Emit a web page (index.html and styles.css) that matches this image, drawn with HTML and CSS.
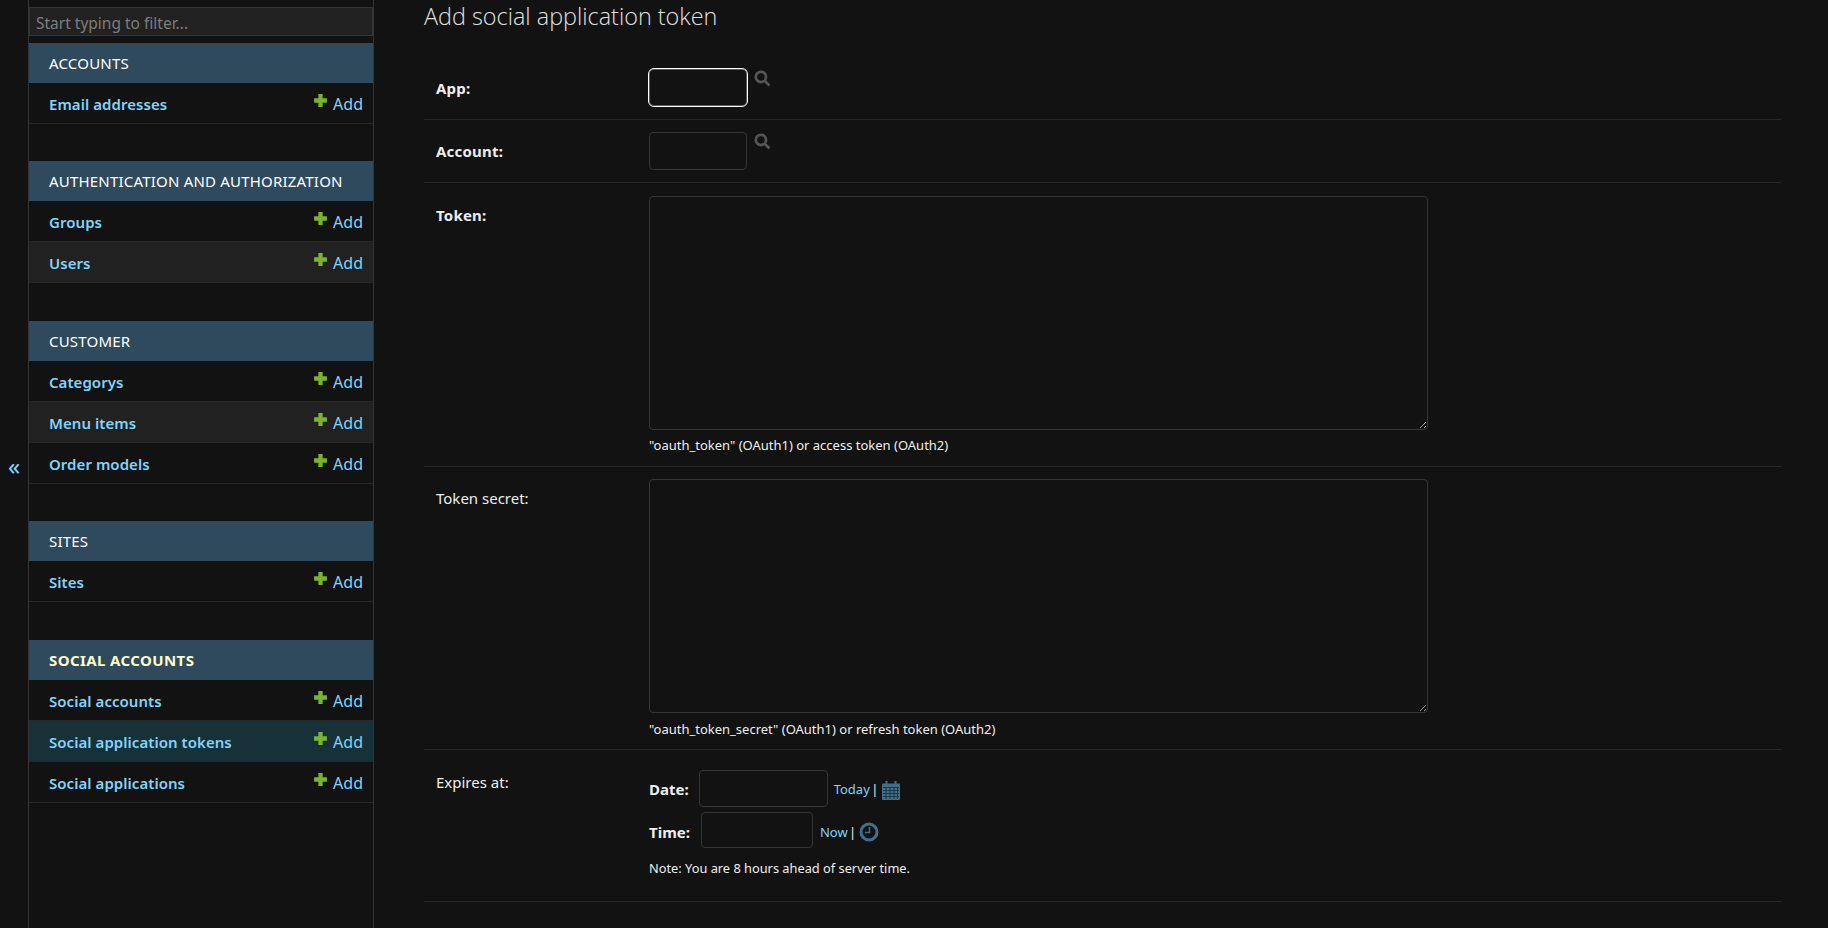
FILE: index.html
```html
<!DOCTYPE html>
<html lang="en">

<head>
  <meta charset="UTF-8">
  <title>Add social application token</title>
  <link rel="stylesheet" href="styles.css">
</head>

<body>
  <div class="page">
    <button class="nav-toggle">«</button>

    <nav class="sidebar">
      <input class="nav-filter" placeholder="Start typing to filter...">

      <div class="app-group">
        <div class="caption">Accounts</div>
        <div class="model-row"><a href="#">Email addresses</a><a class="add-link" href="#"><svg class="plus" viewBox="0 0 14 14"><path d="M5 1h4v4h4v4H9v4H5V9H1V5h4z"/></svg>Add</a></div>
      </div>

      <div class="app-group">
        <div class="caption">Authentication and Authorization</div>
        <div class="model-row"><a href="#">Groups</a><a class="add-link" href="#"><svg class="plus" viewBox="0 0 14 14"><path d="M5 1h4v4h4v4H9v4H5V9H1V5h4z"/></svg>Add</a></div>
        <div class="model-row alt"><a href="#">Users</a><a class="add-link" href="#"><svg class="plus" viewBox="0 0 14 14"><path d="M5 1h4v4h4v4H9v4H5V9H1V5h4z"/></svg>Add</a></div>
      </div>

      <div class="app-group">
        <div class="caption">Customer</div>
        <div class="model-row"><a href="#">Categorys</a><a class="add-link" href="#"><svg class="plus" viewBox="0 0 14 14"><path d="M5 1h4v4h4v4H9v4H5V9H1V5h4z"/></svg>Add</a></div>
        <div class="model-row alt"><a href="#">Menu items</a><a class="add-link" href="#"><svg class="plus" viewBox="0 0 14 14"><path d="M5 1h4v4h4v4H9v4H5V9H1V5h4z"/></svg>Add</a></div>
        <div class="model-row"><a href="#">Order models</a><a class="add-link" href="#"><svg class="plus" viewBox="0 0 14 14"><path d="M5 1h4v4h4v4H9v4H5V9H1V5h4z"/></svg>Add</a></div>
      </div>

      <div class="app-group">
        <div class="caption">Sites</div>
        <div class="model-row"><a href="#">Sites</a><a class="add-link" href="#"><svg class="plus" viewBox="0 0 14 14"><path d="M5 1h4v4h4v4H9v4H5V9H1V5h4z"/></svg>Add</a></div>
      </div>

      <div class="app-group">
        <div class="caption current">Social accounts</div>
        <div class="model-row"><a href="#">Social accounts</a><a class="add-link" href="#"><svg class="plus" viewBox="0 0 14 14"><path d="M5 1h4v4h4v4H9v4H5V9H1V5h4z"/></svg>Add</a></div>
        <div class="model-row selected"><a href="#">Social application tokens</a><a class="add-link" href="#"><svg class="plus" viewBox="0 0 14 14"><path d="M5 1h4v4h4v4H9v4H5V9H1V5h4z"/></svg>Add</a></div>
        <div class="model-row"><a href="#">Social applications</a><a class="add-link" href="#"><svg class="plus" viewBox="0 0 14 14"><path d="M5 1h4v4h4v4H9v4H5V9H1V5h4z"/></svg>Add</a></div>
      </div>
    </nav>

    <main class="content">
      <h1>Add social application token</h1>

      <form>
        <div class="form-row row-app">
          <label class="field-label required">App:</label>
          <input class="id-input focused">
          <svg class="lookup" viewBox="0 0 16 16"><circle cx="6.5" cy="6.5" r="4.8"/><path d="M10 10l4.5 4.5"/></svg>
        </div>

        <div class="form-row row-account">
          <label class="field-label required">Account:</label>
          <input class="id-input">
          <svg class="lookup" viewBox="0 0 16 16"><circle cx="6.5" cy="6.5" r="4.8"/><path d="M10 10l4.5 4.5"/></svg>
        </div>

        <div class="form-row row-token">
          <label class="field-label required">Token:</label>
          <div class="field-box">
            <textarea></textarea>
            <div class="help">"oauth_token" (OAuth1) or access token (OAuth2)</div>
          </div>
        </div>

        <div class="form-row row-secret">
          <label class="field-label">Token secret:</label>
          <div class="field-box">
            <textarea></textarea>
            <div class="help">"oauth_token_secret" (OAuth1) or refresh token (OAuth2)</div>
          </div>
        </div>

        <div class="form-row row-date">
          <label class="field-label">Expires at:</label>
          <div class="field-box">
            <div class="datetime-line date-line">
              <span class="dt-label">Date:</span>
              <input class="date-input">
              <span class="shortcuts"><a href="#">Today</a> |</span>
              <svg class="dt-icon" viewBox="0 0 20 20">
                <path class="fill" d="M1 4.500q0-1 1-1h16q1 0 1 1V19q0 1-1 1H2q-1 0-1-1z"/>
                <path class="fill" d="M4.500 1h2v4h-2zM13.500 1h2v4h-2z"/>
                <path class="grid" d="M2 7.500h16M2 10.500h16M2 13.500h16M2 16.500h16M5 7v12M9 7v12M13 7v12M16.500 7v12"/>
              </svg>
            </div>
            <div class="datetime-line time-line">
              <span class="dt-label">Time:</span>
              <input class="time-input">
              <span class="shortcuts"><a href="#">Now</a> |</span>
              <svg class="dt-icon clock" viewBox="0 0 20 20">
                <circle class="ring" cx="10" cy="10" r="8"/>
                <path class="hands" d="M10.500 5v5.500H6"/>
              </svg>
            </div>
            <div class="note">Note: You are 8 hours ahead of server time.</div>
          </div>
        </div>
      </form>
    </main>
  </div>
</body>

</html>
```

FILE: styles.css
```css
html,
body {
  margin: 0;
  height: 100%;
  overflow: hidden;
  background-color: #121212;
}

body {
  color: #eeeeee;
  font-family: 'Noto Sans', 'Open Sans', sans-serif;
  font-size: 15px;
}

a {
  color: #81d4fa;
  text-decoration: none;
}

.page {
  display: flex;
  height: 928px;
}

/* Collapse button on the far left */
.nav-toggle {
  width: 29px;
  flex: none;
  padding: 3px 0 0;
  background: #121212;
  border: none;
  border-right: 1px solid #353535;
  color: #81d4fa;
  font-family: 'Noto Sans', sans-serif;
  font-size: 24px;
}

.sidebar {
  width: 344px;
  flex: none;
  padding-top: 7px;
  border-right: 1px solid #353535;
}

.nav-filter {
  display: block;
  box-sizing: border-box;
  width: 100%;
  height: 29px;
  margin-bottom: 6.75px;
  padding: 2px 6px 0;
  background: #212121;
  border: 1px solid #353535;
  border-radius: 0;
  font-family: inherit;
  font-size: 15.5px;
}

.nav-filter::placeholder {
  color: #7d7d7d;
}

.app-group {
  margin-bottom: 37.5px;
}

.caption {
  height: 40px;
  padding-left: 20px;
  background: #2f4a5c;
  color: #ffffff;
  font-size: 15px;
  letter-spacing: 0.2px;
  line-height: 41px;
  text-transform: uppercase;
}

.caption.current {
  color: #ffffcc;
  font-weight: 700;
  letter-spacing: 0.4px;
}

.model-row {
  display: flex;
  justify-content: space-between;
  height: 40px;
  padding: 0 10px 0 20px;
  border-bottom: 1px solid #282828;
  line-height: 43px;
}

.model-row > a:first-child {
  font-weight: 600;
  letter-spacing: 0.05px;
}

.model-row.alt {
  background: #212121;
}

.model-row.selected {
  background: #163238;
}

.add-link {
  display: flex;
  align-items: flex-start;
  font-size: 16px;
}

.plus {
  width: 15px;
  height: 15px;
  margin: 10px 5px 0 0;
  fill: #7ab32e;
}

.content {
  flex: 1;
  padding: 0 47px 0 50px;
}

h1 {
  margin: 0;
  height: 56px;
  color: #e0e0e0;
  font-family: 'Open Sans', sans-serif;
  font-size: 23.4px;
  font-weight: 300;
  line-height: 32px;
}

.form-row {
  display: flex;
  box-sizing: border-box;
  padding: 12px 0 0 12px;
  border-bottom: 1px solid #282828;
}

.row-app {
  height: 64px;
}

.row-account {
  height: 63px;
}

.row-token {
  height: 284px;
  padding-top: 13px;
}

.row-secret {
  height: 283px;
}

.row-date {
  height: 152px;
  padding-top: 17px;
}

.field-label {
  width: 213px;
  flex: none;
  height: 20px;
  padding-top: 10px;
  line-height: 20px;
}

.row-account .field-label,
.row-token .field-label,
.row-secret .field-label {
  padding-top: 9px;
}

.row-date .field-label {
  padding-top: 5px;
}

.required {
  letter-spacing: 0.2px;
  font-weight: 700;
}

input,
textarea {
  box-sizing: border-box;
  background: #121212;
  border: 1px solid #353535;
  border-radius: 4px;
  color: #eeeeee;
}

.id-input {
  width: 98px;
  height: 38px;
}

.id-input.focused {
  width: 100px;
  height: 39px;
  margin-left: -1px;
  border: 1px solid #ffffff;
  border-radius: 6px;
  box-shadow: inset 0 0 0 1px rgba(255, 255, 255, 0.3);
}

.lookup {
  width: 17px;
  height: 17px;
  margin: 1px 0 0 7px;
  fill: none;
  stroke: #555555;
  stroke-width: 2.6;
}

.focused + .lookup {
  margin: 2px 0 0 6px;
}

.field-box {
  display: flex;
  flex-direction: column;
}

textarea {
  display: block;
  width: 779px;
  height: 234px;
}

.help {
  margin-top: 7px;
  font-size: 13px;
  line-height: 17px;
}

.row-secret .help {
  margin-top: 8px;
}

.datetime-line {
  display: flex;
  align-items: center;
  height: 42px;
}

.dt-label {
  font-weight: 700;
}

.dt-label,
.shortcuts {
  padding-top: 2px;
}

.time-line .dt-label,
.time-line .shortcuts {
  padding-top: 4px;
}

.date-input {
  width: 129px;
  height: 37px;
  margin: 0 6px 0 10px;
}

.time-input {
  width: 112px;
  height: 36px;
  margin: 0 7px 0 11px;
}

.shortcuts {
  margin-right: 3px;
  font-size: 13px;
  word-spacing: -2px;
}

.dt-icon {
  width: 20px;
  height: 20px;
  margin-top: 4px;
}

.dt-icon .fill {
  fill: #3f6f8a;
}

.dt-icon .grid {
  fill: none;
  stroke: #1c3947;
  stroke-width: 1;
}

.dt-icon .ring {
  fill: none;
  stroke: #3f6f8a;
  stroke-width: 3;
}

.dt-icon .hands {
  fill: none;
  stroke: #3f6f8a;
  stroke-width: 1.5;
}

.note {
  margin-top: 9px;
  font-size: 12.8px;
  line-height: 17px;
}
```
